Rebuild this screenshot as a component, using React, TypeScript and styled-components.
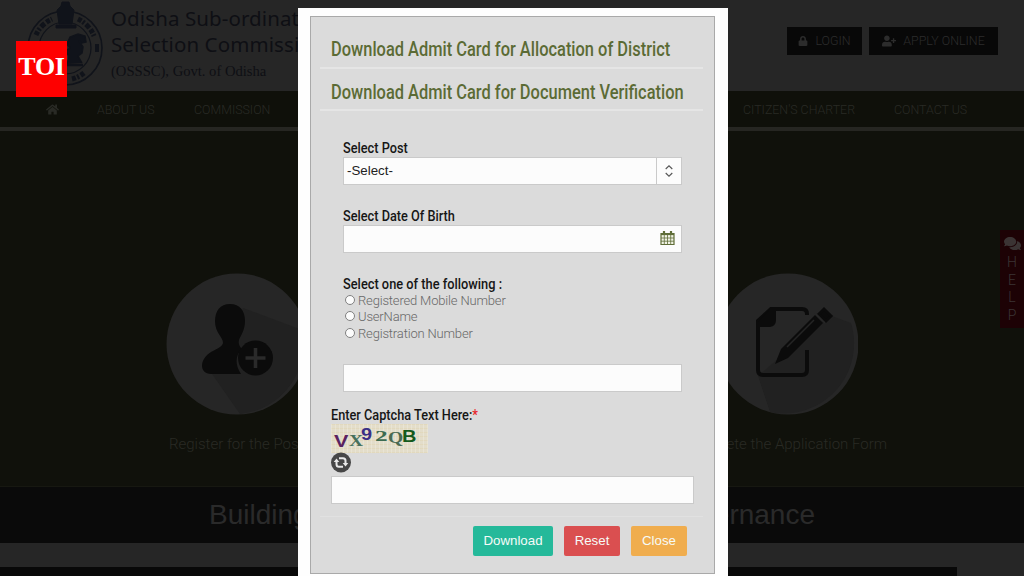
import React from "react";
import styled, { createGlobalStyle } from "styled-components";
import { FaHome, FaLock, FaUserPlus, FaComments } from "react-icons/fa";

const Global = createGlobalStyle`
  html, body { margin: 0; padding: 0; background: #262626; }
  *, *::before, *::after { box-sizing: border-box; }
`;

const Page = styled.div`
  position: relative;
  width: 1024px;
  height: 576px;
  overflow: hidden;
  display: flex;
  flex-direction: column;
  background: #262626;
  font-family: Roboto, sans-serif;
`;

/* Runs of text narrowed to a condensed width */
const Narrow = styled.span<{ $x: number }>`
  display: inline-block;
  white-space: nowrap;
  transform: scaleX(${(p) => p.$x});
  transform-origin: left center;
`;

const Header = styled.header`
  height: 91px;
  flex: none;
  display: flex;
  justify-content: space-between;
  padding: 0 26px 0 26px;
  background: #262626;
`;

const Brand = styled.div`
  display: flex;
  gap: 7px;
`;

const BrandText = styled.div`
  padding-top: 5px;
  color: #0e0f14;
  white-space: nowrap;
`;

const BrandLine = styled.div`
  height: 26px;
  font: 20.5px/26px "Noto Sans", sans-serif;
  letter-spacing: 0.1px;
`;

const BrandNote = styled.div`
  height: 28px;
  font: 14.6px/28px "Liberation Serif", serif;
`;

const HeaderActions = styled.div`
  display: flex;
  gap: 7px;
  padding-top: 27px;
`;

const DarkButton = styled.button<{ $w: number }>`
  width: ${(p) => p.$w}px;
  height: 28px;
  padding: 0;
  border: 0;
  background: #080808;
  color: #2c2c2c;
  display: flex;
  align-items: center;
  justify-content: center;
  gap: 7px;
  font: 300 12.4px/30px Roboto, sans-serif;
  white-space: nowrap;
`;

const Nav = styled.nav`
  height: 40px;
  flex: none;
  display: flex;
  align-items: center;
  padding: 1px 0 0 46px;
  background: #0f100a;
  border-bottom: 4px solid #262622;
  color: #292a25;
  font: 300 12.4px/36px Roboto, sans-serif;
  white-space: nowrap;
`;

const NavItem = styled.span<{ $w: number }>`
  width: ${(p) => p.$w}px;
  flex: none;
  display: flex;
  align-items: center;
`;

const Hero = styled.section`
  height: 355px;
  flex: none;
  display: flex;
  justify-content: space-between;
  padding: 142px 137px 0 166px;
  background: #10110b;
`;

const Step = styled.div<{ $end?: boolean }>`
  display: flex;
  flex-direction: column;
  align-items: ${(p) => (p.$end ? "flex-end" : "flex-start")};
  svg { display: block; margin-right: ${(p) => (p.$end ? 29 : 0)}px; }
`;

const StepText = styled.div`
  padding: 18px 0 0 3px;
  font: 300 15px/22px Roboto, sans-serif;
  color: #292a24;
  white-space: nowrap;
`;

const Strip = styled.section`
  height: 57px;
  flex: none;
  display: flex;
  justify-content: space-between;
  padding: 0 209px;
  background: #0a0a0a;
  border-top: 1px solid #171811;
  color: #2a2a2a;
  font: 28px/56px "Liberation Sans", Arial, sans-serif;
`;

const BottomBar = styled.div`
  width: 957px;
  height: 10px;
  margin-top: 24px;
  flex: none;
  background: #080808;
`;

const ToiBadge = styled.div`
  position: absolute;
  left: 16px;
  top: 41px;
  width: 51px;
  height: 56px;
  background: #fe0000;
  color: #fff;
  text-align: center;
  font: bold 26px/52px "Liberation Serif", serif;
  letter-spacing: -0.3px;
`;

const Help = styled.aside`
  position: absolute;
  left: 1000px;
  top: 230px;
  width: 24px;
  height: 98px;
  padding-top: 5px;
  background: #1d0205;
  color: #3b3434;
  display: flex;
  flex-direction: column;
  align-items: center;
  font: 300 14px/17.7px Roboto, sans-serif;
  svg { margin-bottom: 2px; flex: none; }
`;

const Modal = styled.div`
  position: absolute;
  left: 298px;
  top: 8px;
  width: 430px;
  height: 580px;
  padding: 8px 13px 0 12px;
  background: #fefefe;
`;

const Panel = styled.form`
  height: 558px;
  padding: 11px 11px 0 9px;
  background: #dbdbdb;
  border: 1px solid #a9a9a9;
`;

const Heading = styled.h2<{ $h: number; $lh: number }>`
  height: ${(p) => p.$h}px;
  margin: 0;
  padding: 0 0 0 11px;
  border-bottom: 2px solid #e5e5e5;
  color: #5b6b35;
  font: 500 19.3px/${(p) => p.$lh}px Roboto, sans-serif;
`;

const Fields = styled.div`
  padding: 29px 21px 0 23px;
`;

const Label = styled.div`
  height: 17px;
  color: #161616;
  font: 500 14.4px/18px Roboto, sans-serif;
`;

const Box = styled.div<{ $mt?: number; $mb?: number }>`
  height: 28px;
  margin-top: ${(p) => p.$mt ?? 0}px;
  margin-bottom: ${(p) => p.$mb ?? 0}px;
  display: flex;
  align-items: stretch;
  justify-content: space-between;
  background: #fcfcfc;
  border: 1px solid #cacaca;
  color: #222;
  font: 13.3px/26px "Liberation Sans", Arial, sans-serif;
  padding-left: 3px;
`;

const Stepper = styled.span`
  width: 25px;
  border-left: 1px solid #cacaca;
  display: flex;
  align-items: center;
  justify-content: center;
`;

const DateIcon = styled.span`
  width: 21px;
  padding-top: 3px;
`;

const Radio = styled.label`
  height: 16.3px;
  display: flex;
  align-items: center;
  gap: 3px;
  padding-left: 2px;
  color: #686868;
  font: 300 13px/16px Roboto, sans-serif;
  letter-spacing: -0.17px;
`;

const Dot = styled.span`
  width: 10px;
  height: 10px;
  margin-bottom: 2px;
  flex: none;
  border: 1px solid #808080;
  border-radius: 50%;
  background: #fcfcfc;
`;

const CaptchaArea = styled.div`
  padding: 15px 9px 0 11px;
`;

const Star = styled.span`
  color: #e8262b;
`;

const Captcha = styled.div`
  width: 97px;
  height: 29px;
  display: flex;
  align-items: center;
  padding-left: 3px;
  background:
    repeating-linear-gradient(90deg, rgba(255,255,255,0.2) 0 1px, transparent 1px 4px),
    repeating-linear-gradient(0deg, rgba(222,205,160,0.3) 0 1px, transparent 1px 4px),
    #e3ddca;
`;

const Glyph = styled.span<{ $c: string; $y: number; $w: number; $serif?: boolean; $s: number; $x?: number }>`
  width: ${(p) => p.$w}px;
  flex: none;
  color: ${(p) => p.$c};
  font: bold ${(p) => p.$s}px/16px ${(p) => (p.$serif ? '"Liberation Serif", serif' : '"Liberation Sans", sans-serif')};
  transform: translateY(${(p) => p.$y}px) scaleX(${(p) => p.$x ?? 1});
  transform-origin: left center;
`;

const Refresh = styled.div`
  height: 23px;
  svg { display: block; margin-top: -1px; }
`;

const Divider = styled.div`
  height: 1px;
  margin: 12px 0 9px;
  background: #e1e1e1;
`;

const Buttons = styled.div`
  display: flex;
  justify-content: flex-end;
  gap: 11px;
  padding-right: 16px;
`;

const Action = styled.button<{ $bg: string; $w: number }>`
  width: ${(p) => p.$w}px;
  height: 30px;
  padding: 0;
  border: 0;
  border-radius: 2px;
  background: ${(p) => p.$bg};
  color: #f6fbf8;
  font: 13.3px/29px "Liberation Sans", Arial, sans-serif;
`;

const Emblem = () => (
  <svg width="78" height="90" viewBox="0 0 78 90" fill="none" stroke="#10131a">
    <circle cx="39" cy="48" r="37" strokeWidth="1.6" />
    <circle cx="39" cy="48" r="26" strokeWidth="1.2" />
    <g strokeWidth="5" strokeDasharray="4 1.500 2 2 5 2">
      <path d="M10 35a31.500 31.500 0 0 1 16-16" />
      <path d="M52 19a31.500 31.500 0 0 1 16 17" />
      <path d="M46 79a31.500 31.500 0 0 0 12-6" />
    </g>
    <path d="M33 24l-2-14 4-4 1-4h7l1 4 4 4-2 14z" fill="#10131a" />
    <path d="M30 25h20v3H30z" fill="#10131a" />
    <path d="M40 64c3-4 4-7 2-10l-5 2 1-4 6-4-3-4 3-7 8-3 7 2 1 6-4 1-3-2 4 6-1 6-4 3 4 7" fill="#10131a" strokeWidth="1.500" />
    <path d="M22 65h35" strokeWidth="2.5" />
    <path d="M71 44v8" strokeWidth="4" />
  </svg>
);

const RegisterArt = () => (
  <svg width="141" height="142" viewBox="0 0 141 142">
    <circle cx="71" cy="71" r="70.5" fill="#262626" />
    <path d="M77 35l59 22a70 70 0 0 1-62 84L44 98z" fill="#212121" />
    <path d="M64 31c10 0 15 7 15 17 0 9-4 14-6 19-1 4 1 7 3 9-7 6-7 16-1 25H45c-12 0-12-15 0-22 7-4 11-5 12-9 0-6-8-10-8-22 0-10 5-17 15-17z" fill="#0b0b0b" />
    <circle cx="89.500" cy="85" r="17.5" fill="#0b0b0b" />
    <path d="M89.500 75v20M79.500 85h20" stroke="#2a2a2a" strokeWidth="3.6" />
  </svg>
);

const FormArt = () => (
  <svg width="141" height="142" viewBox="0 0 141 142">
    <circle cx="71" cy="71" r="70.5" fill="#262626" />
    <path d="M112 42l22 8a70 70 0 0 1-81 89L41 103z" fill="#212121" />
    <path d="M90 42v-1q0-5-5-5H54L41 48v49q0 5 5 5h39q5 0 5-5V77" fill="none" stroke="#0b0b0b" strokeWidth="4" />
    <path d="M41 49l12-13h6v11q0 6-6 7H41z" fill="#0b0b0b" />
    <path d="M58 91l6-15 34-34 8 8-35 35z" fill="#0b0b0b" />
    <path d="M70 74l27-27" stroke="#242424" strokeWidth="1.6" />
    <path d="M102 41l5-5 7 7-5 5z" fill="#0b0b0b" stroke="#0b0b0b" strokeWidth="3" />
    <path d="M98 40l10 10" stroke="#262626" strokeWidth="1.2" />
  </svg>
);

const CalendarIcon = () => (
  <svg width="15" height="16" viewBox="0 0 15 16" fill="none" stroke="#5f6d38">
    <path d="M1 3.5h13v11H1z" fill="#f0f2e4" strokeWidth="1.2" />
    <path d="M1 4.2h13" strokeWidth="1.800" />
    <path d="M1 8h13M1 11.200h13M4.3 5v9.500M7.500 5v9.500M10.700 5v9.500" strokeWidth="0.8" />
    <path d="M4 1v3M11 1v3" strokeWidth="2.2" />
  </svg>
);

const RefreshIcon = () => (
  <svg width="20" height="21" viewBox="0 0 20 21">
    <circle cx="10" cy="10.500" r="10" fill="#474747" />
    <g fill="none" stroke="#e9e9e9" strokeWidth="2">
      <path d="M8 6.300h4q2.500 0 2.500 2.500V12" />
      <path d="M12 14.700H8q-2.500 0-2.500-2.500V9" />
    </g>
    <path d="M11.700 11l2.800 3.500 2.800-3.500zM2.700 10l2.800-3.500 2.800 3.500z" fill="#e9e9e9" />
  </svg>
);

export default function App() {
  return (
    <>
      <Global />
      <Page>
        <Header>
          <Brand>
            <Emblem />
            <BrandText>
              <BrandLine>Odisha Sub-ordinate</BrandLine>
              <BrandLine>Selection Commission</BrandLine>
              <BrandNote>(OSSSC), Govt. of Odisha</BrandNote>
            </BrandText>
          </Brand>
          <HeaderActions>
            <DarkButton $w={75}><FaLock size={10} />LOGIN</DarkButton>
            <DarkButton $w={129}><FaUserPlus size={14} />APPLY ONLINE</DarkButton>
          </HeaderActions>
        </Header>
        <Nav>
          <NavItem $w={51}><FaHome size={13} /></NavItem>
          <NavItem $w={97}>ABOUT US</NavItem>
          <NavItem $w={549}>COMMISSION</NavItem>
          <NavItem $w={151}>CITIZEN'S CHARTER</NavItem>
          <NavItem $w={90}>CONTACT US</NavItem>
        </Nav>
        <Hero>
          <Step>
            <RegisterArt />
            <StepText>Register for the Post</StepText>
          </Step>
          <Step $end>
            <FormArt />
            <StepText>Complete the Application Form</StepText>
          </Step>
        </Hero>
        <Strip>
          <span>Building</span>
          <span>Governance</span>
        </Strip>
        <BottomBar />

        <ToiBadge>TOI</ToiBadge>
        <Help>
          <FaComments size={17} />
          <span>H</span><span>E</span><span>L</span><span>P</span>
        </Help>

        <Modal>
          <Panel>
            <Heading $h={41} $lh={44}><Narrow $x={0.852}>Download Admit Card for Allocation of District</Narrow></Heading>
            <Heading $h={42} $lh={47}><Narrow $x={0.852}>Download Admit Card for Document Verification</Narrow></Heading>
            <Fields>
              <Label><Narrow $x={0.885}>Select Post</Narrow></Label>
              <Box $mb={23}>
                <span>-Select-</span>
                <Stepper>
                  <svg width="8" height="12" viewBox="0 0 8 12" fill="none" stroke="#555" strokeWidth="1.100">
                    <path d="M0.700 4L4 0.800 7.300 4M0.700 8L4 11.200 7.300 8" />
                  </svg>
                </Stepper>
              </Box>
              <Label><Narrow $x={0.885}>Select Date Of Birth</Narrow></Label>
              <Box $mb={23}>
                <span />
                <DateIcon><CalendarIcon /></DateIcon>
              </Box>
              <Label><Narrow $x={0.89}>Select one of the following :</Narrow></Label>
              <Radio><Dot />Registered Mobile Number</Radio>
              <Radio><Dot />UserName</Radio>
              <Radio><Dot />Registration Number</Radio>
              <Box $mt={22} />
            </Fields>
            <CaptchaArea>
              <Label><Narrow $x={0.885}>Enter Captcha Text Here:<Star>*</Star></Narrow></Label>
              <Captcha>
                <Glyph $c="#5a2260" $s={16} $y={4} $w={15} $x={1.35}>V</Glyph>
                <Glyph $c="#47705c" $s={17} $y={3} $w={12} $serif $x={1.15}>X</Glyph>
                <Glyph $c="#3a2f86" $s={16} $y={-3} $w={14} $x={1.25}>9</Glyph>
                <Glyph $c="#3c6b50" $s={14} $y={-1} $w={13} $serif $x={1.8}>2</Glyph>
                <Glyph $c="#4a6a52" $s={17} $y={0} $w={14} $serif $x={1.15}>Q</Glyph>
                <Glyph $c="#155a1c" $s={16} $y={-1} $w={14} $x={1.25}>B</Glyph>
              </Captcha>
              <Refresh><RefreshIcon /></Refresh>
              <Box $mt={1} />
            </CaptchaArea>
            <Divider />
            <Buttons>
              <Action type="button" $bg="#25b99a" $w={80}>Download</Action>
              <Action type="button" $bg="#da4f50" $w={56}>Reset</Action>
              <Action type="button" $bg="#f0ad4e" $w={56}>Close</Action>
            </Buttons>
          </Panel>
        </Modal>
      </Page>
    </>
  );
}
